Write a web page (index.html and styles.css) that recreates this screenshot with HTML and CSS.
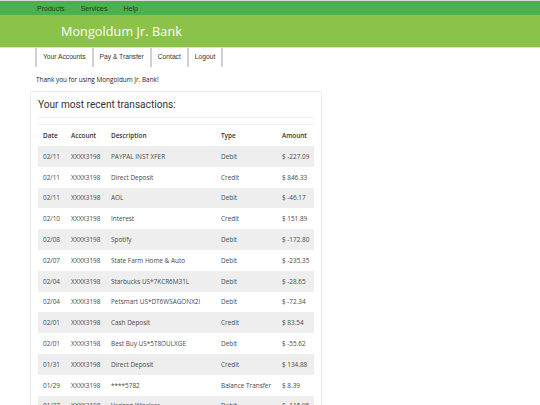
FILE: index.html
```html
<!DOCTYPE html>
<html>
<head>
<meta charset="utf-8">
<link rel="stylesheet" href="styles.css">
</head>
<body>
<div class="topbar">
  <a class="toplink">Products</a>
  <a class="toplink">Services</a>
  <a class="toplink">Help</a>
</div>
<div class="header"><h1 class="brand">Mongoldum Jr. Bank</h1></div>
<nav class="tabs">
  <a class="tab">Your Accounts</a>
  <a class="tab">Pay &amp; Transfer</a>
  <a class="tab">Contact</a>
  <a class="tab">Logout</a>
</nav>
<p class="thanks">Thank you for using Mongoldum Jr. Bank!</p>
<div class="card">
  <h2 class="card-title">Your most recent transactions:</h2>
  <div class="rule"></div>
  <table class="tx">
    <colgroup><col class="c-date"><col class="c-acct"><col class="c-desc"><col class="c-type"><col class="c-amt"></colgroup>
    <thead>
      <tr><th>Date</th><th>Account</th><th>Description</th><th>Type</th><th>Amount</th></tr>
    </thead>
    <tbody>
      <tr><td>02/11</td><td>XXXX3198</td><td>PAYPAL INST XFER</td><td>Debit</td><td>$ -227.09</td></tr>
      <tr><td>02/11</td><td>XXXX3198</td><td>Direct Deposit</td><td>Credit</td><td>$ 846.33</td></tr>
      <tr><td>02/11</td><td>XXXX3198</td><td>AOL</td><td>Debit</td><td>$ -46.17</td></tr>
      <tr><td>02/10</td><td>XXXX3198</td><td>Interest</td><td>Credit</td><td>$ 151.89</td></tr>
      <tr><td>02/08</td><td>XXXX3198</td><td>Spotify</td><td>Debit</td><td>$ -172.80</td></tr>
      <tr><td>02/07</td><td>XXXX3198</td><td>State Farm Home &amp; Auto</td><td>Debit</td><td>$ -235.35</td></tr>
      <tr><td>02/04</td><td>XXXX3198</td><td>Starbucks US*7KCR6M31L</td><td>Debit</td><td>$ -28.65</td></tr>
      <tr><td>02/04</td><td>XXXX3198</td><td>Petsmart US*DT6WSAGONX2I</td><td>Debit</td><td>$ -72.34</td></tr>
      <tr><td>02/01</td><td>XXXX3198</td><td>Cash Deposit</td><td>Credit</td><td>$ 83.54</td></tr>
      <tr><td>02/01</td><td>XXXX3198</td><td>Best Buy US*5T8OULXGE</td><td>Debit</td><td>$ -55.62</td></tr>
      <tr><td>01/31</td><td>XXXX3198</td><td>Direct Deposit</td><td>Credit</td><td>$ 134.88</td></tr>
      <tr><td>01/29</td><td>XXXX3198</td><td>****5782</td><td>Balance Transfer</td><td>$ 8.39</td></tr>
      <tr><td>01/27</td><td>XXXX3198</td><td>Verizon Wireless</td><td>Debit</td><td>$ -115.95</td></tr>
      <tr><td>01/25</td><td>XXXX3198</td><td>Interest</td><td>Credit</td><td>$ 12.40</td></tr>
    </tbody>
  </table>
</div>
</body>
</html>
```
FILE: styles.css
```css
html, body { margin: 0; padding: 0; background: #fff; }
body { font-family: "Liberation Sans", Arial, sans-serif; color: #333; }

.topbar {
  border-top: 1px solid #d8d8d8;
  background: #4caf50;
  height: 14px;
  display: flex;
  align-items: center;
  padding-left: 37px;
  gap: 16px;
}
.toplink { font-size: 7px; color: #1f3d1f; }

.header {
  background: #8bc34a;
  height: 32px;
  border-bottom: 1px solid #dcdcdc;
  display: flex;
  align-items: center;
}
.brand {
  margin: 0 0 0 61px;
  font-family: "Open Sans", sans-serif;
  font-weight: 400;
  font-size: 12.6px;
  color: #fff;
  letter-spacing: 0.1px;
}

.tabs {
  display: flex;
  margin-left: 35px;
  height: 19px;
}
.tab {
  display: flex;
  align-items: center;
  padding: 0 6px 2px;
  font-size: 6.7px;
  color: #333;
  border-left: 2px solid #d0d0d0;
}
.tab:last-child { border-right: 2px solid #d0d0d0; }

.thanks {
  margin: 8px 0 0 36px;
  font-family: "Open Sans", sans-serif;
  font-size: 6.4px;
  color: #222;
}

.card {
  margin: 7px 0 0 30px;
  width: 276px;
  border: 1px solid #ececec;
  padding: 0 7px;
}
.card-title {
  margin: 0;
  box-sizing: border-box;
  font-family: Roboto, sans-serif;
  font-weight: 400;
  font-size: 10.1px;
  line-height: 12px;
  color: #333;
  height: 25px;
  padding-top: 7px;
}
.rule { border-top: 1px solid #eeeeee; height: 6px; }

.tx {
  width: 100%;
  border-collapse: collapse;
  table-layout: fixed;
  font-family: "Open Sans", sans-serif;
  font-size: 6.4px;
  color: #484848;
}
.c-date { width: 28px; }
.c-acct { width: 40px; }
.c-desc { width: 110px; }
.c-type { width: 61px; }
.c-amt { width: 37px; }
.tx thead tr { border-top: 1px solid #eeeeee; }
.tx th {
  text-align: left;
  font-weight: 600;
  color: #333;
  height: 21px;
  padding: 0 0 0 5px;
  white-space: nowrap;
}
.tx td {
  height: 20.8px;
  padding: 0 0 0 5px;
  white-space: nowrap;
}
.tx tbody tr:nth-child(odd) { background: #eeeeee; }
```
